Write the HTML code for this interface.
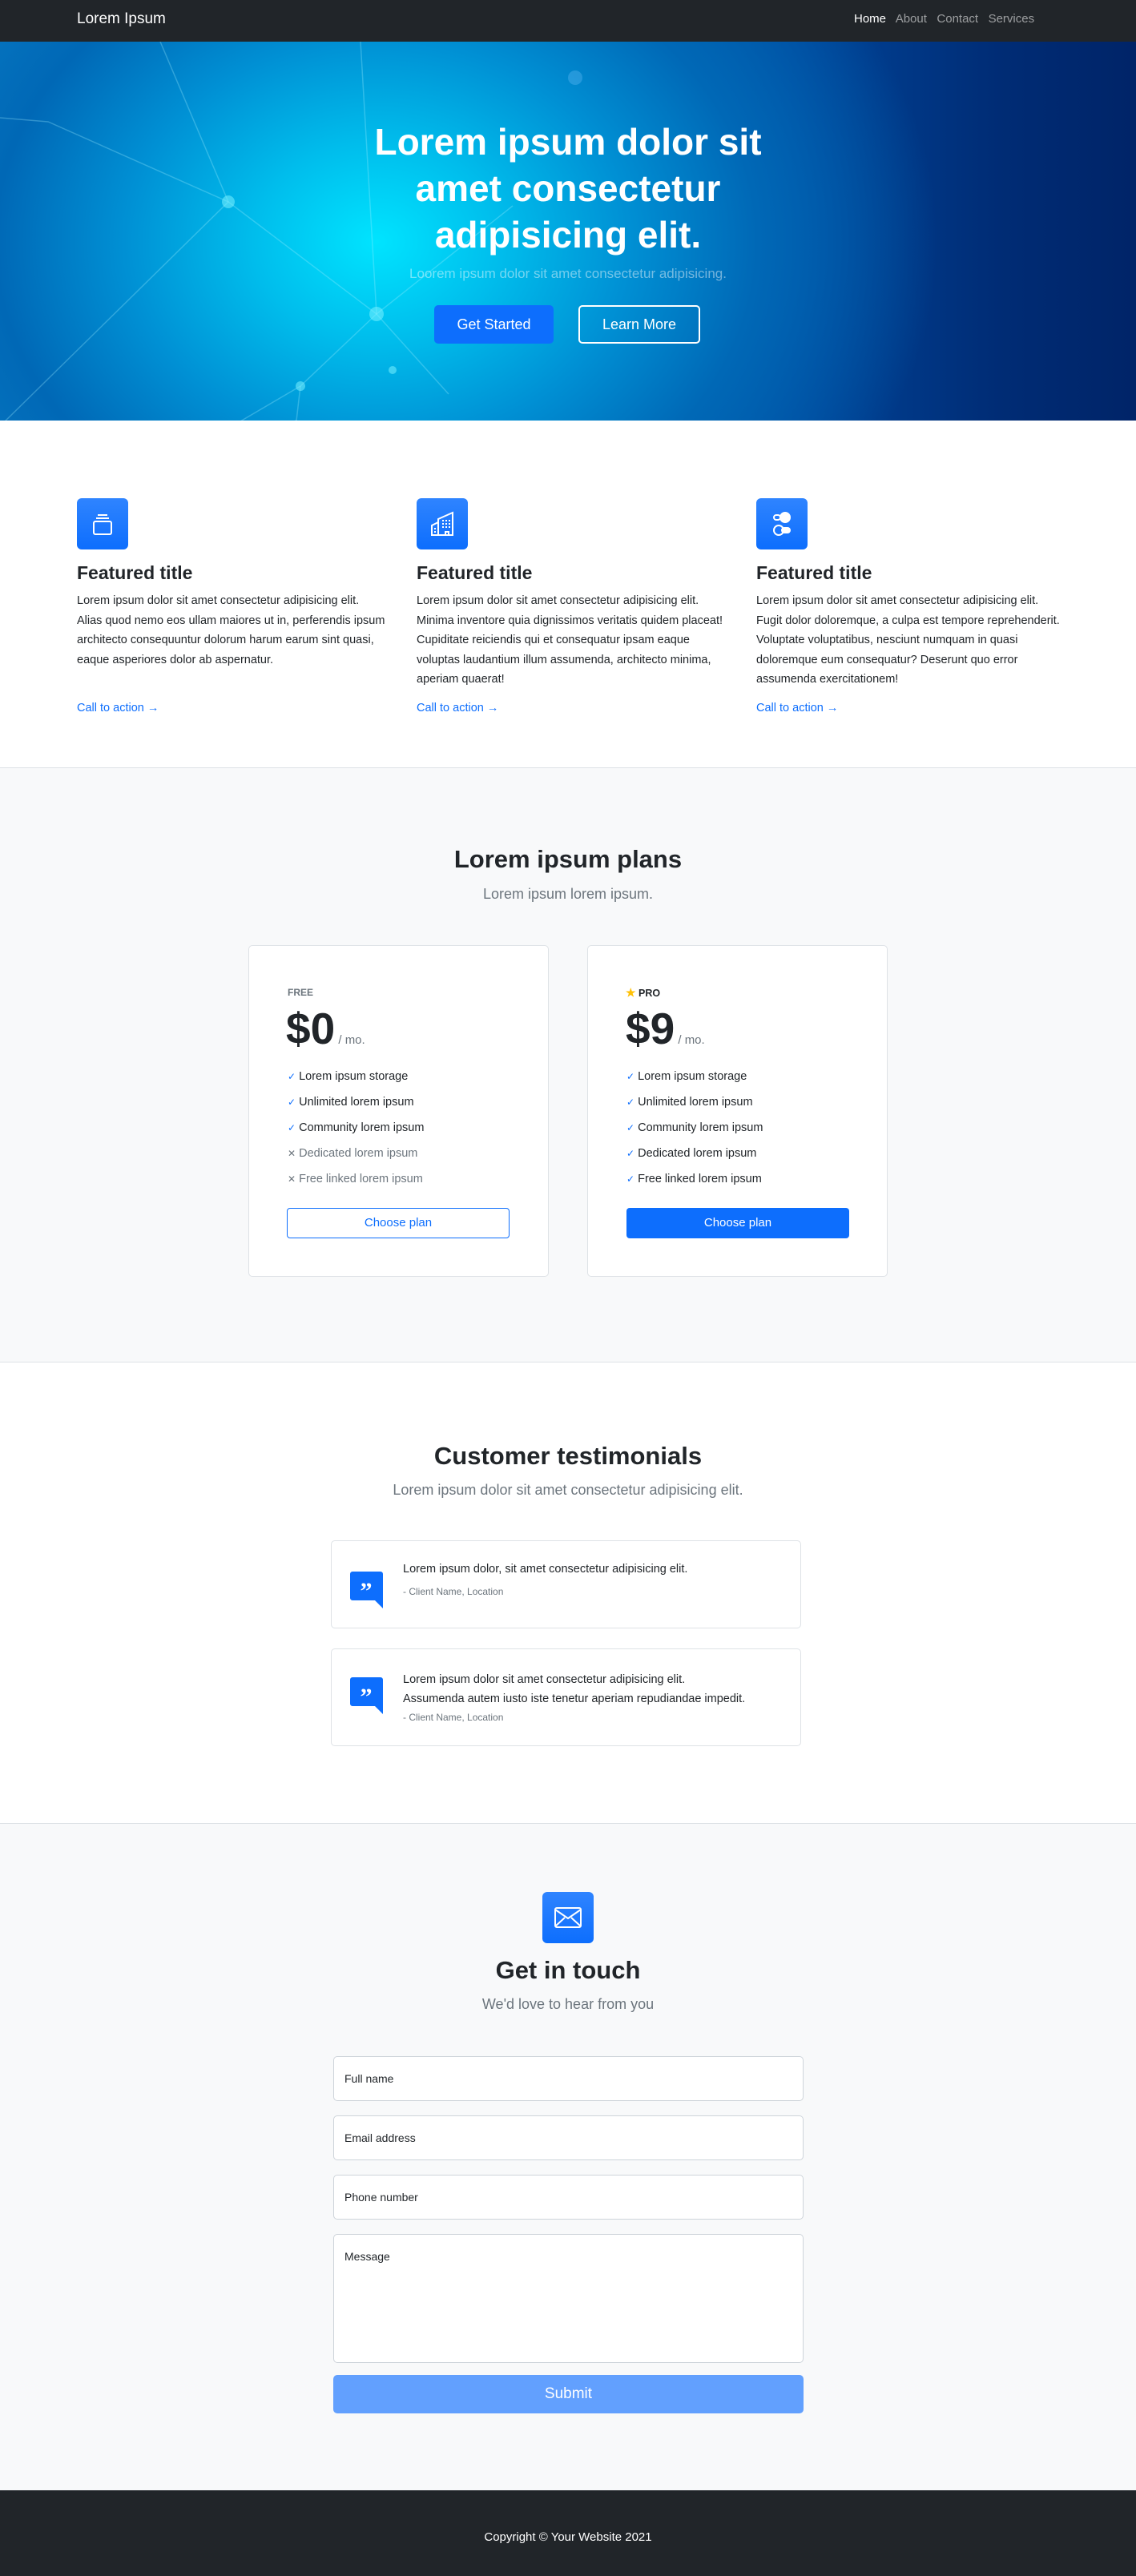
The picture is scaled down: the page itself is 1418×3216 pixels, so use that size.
<!DOCTYPE html>
<html><head><meta charset="utf-8"><style>
*{box-sizing:border-box;margin:0;padding:0}
body{width:1418px;height:3216px;position:relative;font-family:"Liberation Sans",sans-serif;color:#212529;background:#fff;overflow:hidden}
.a{position:absolute}
.c{text-align:center;left:0;width:1418px}
nav{position:absolute;left:0;top:0;width:1418px;height:52px;background:#212529}
.hero{top:52px;left:0;width:1418px;height:473px;background:radial-gradient(ellipse 700px 560px at 470px 250px,#00e4ff 0%,#00bdec 22%,#0090d4 45%,#0068b6 68%,rgba(0,60,140,0) 100%),linear-gradient(90deg,#0a80c8 0%,#0066b6 45%,#00459a 70%,#002c75 88%,#002468 100%);overflow:hidden}
.icon{width:64px;height:64px;border-radius:6px;background:linear-gradient(#2f84ff,#0d6efd);display:flex;align-items:center;justify-content:center}
.ft{font-size:23px;font-weight:bold}
.fp{font-size:14.5px;line-height:24.6px;width:385px}
.cta{font-size:14.5px;color:#0d6efd}
.card{background:#fff;border:1px solid #dee2e6;border-radius:5px}
.li{font-size:14.5px;height:32px;line-height:32px}
.inp{left:416px;width:587px;height:56px;background:#fff;border:1px solid #ced4da;border-radius:5px;font-size:14px;padding:19px 13px}
</style></head><body>
<nav><div class="a" style="left:96px;top:13px;color:#fff;font-size:19px">Lorem Ipsum</div>
<div class="a" style="left:1066px;top:15px;font-size:15px;color:rgba(255,255,255,.55)"><span style="color:#fff">Home</span>&nbsp;&nbsp; About&nbsp;&nbsp; Contact&nbsp;&nbsp; Services</div></nav>
<div class="a hero">
<svg width="1418" height="473" style="position:absolute;left:0;top:0" stroke="rgba(160,240,255,.3)" stroke-width="1.5" fill="none">
<path d="M0 95 L60 100 L285 200 L470 340 L640 205"/><path d="M285 200 L0 480"/><path d="M470 340 L375 430 L0 650"/><path d="M285 200 L200 0"/><path d="M470 340 L450 0"/><path d="M375 430 L370 473"/><path d="M0 600 L370 473"/><path d="M470 340 L560 440"/>
<g fill="rgba(120,240,255,.55)" stroke="none"><circle cx="285" cy="200" r="8"/><circle cx="470" cy="340" r="9"/><circle cx="375" cy="430" r="6"/><circle cx="718" cy="45" r="9" fill="rgba(120,200,255,.3)"/><circle cx="490" cy="410" r="5"/></g></svg>
<div class="a c" style="top:96px;color:#fff;font-size:46px;font-weight:bold;line-height:58px">Lorem ipsum dolor sit<br>amet consectetur<br>adipisicing elit.</div>
<div class="a c" style="top:280px;color:rgba(255,255,255,.45);font-size:17px">Loorem ipsum dolor sit amet consectetur adipisicing.</div>
<div class="a" style="left:542px;top:329px;width:149px;height:48px;background:#0d6efd;border-radius:5px;color:#fff;font-size:18px;line-height:48px;text-align:center">Get Started</div>
<div class="a" style="left:722px;top:329px;width:152px;height:48px;border:2px solid #fff;border-radius:5px;color:#fff;font-size:18px;line-height:44px;text-align:center">Learn More</div>
</div>

<div class="a icon" style="left:96px;top:622px"><svg width="32" height="32" viewBox="0 0 16 16" fill="none" stroke="#fff" stroke-width="1"><path d="M5 2.5h6M4 4.5h8"/><rect x="2.5" y="6.5" width="11" height="8" rx="1"/></svg></div>
<div class="a icon" style="left:520px;top:622px"><svg width="32" height="32" viewBox="0 0 16 16" fill="none" stroke="#fff" stroke-width="1"><path d="M1.5 15V9l4-2V15M5.5 15V5l9-4V15H1M10 15v-2h2v2"/><path d="M8 6h1M10 6h1M12 6h1M8 8h1M10 8h1M12 8h1M8 10h1M10 10h1M12 10h1M3 11h1M3 13h1"/></svg></div>
<div class="a icon" style="left:944px;top:622px"><svg width="32" height="32" viewBox="0 0 16 16" fill="#fff" stroke="#fff" stroke-width="1"><circle cx="10" cy="4" r="3"/><rect x="3" y="2.5" width="4" height="3" rx="1.5" fill="none"/><circle cx="6" cy="12" r="3" fill="none"/><rect x="8" y="10.5" width="5" height="3" rx="1.5"/></svg></div>
<div class="a ft" style="left:96px;top:702px">Featured title</div>
<div class="a ft" style="left:520px;top:702px">Featured title</div>
<div class="a ft" style="left:944px;top:702px">Featured title</div>
<div class="a fp" style="left:96px;top:738px">Lorem ipsum dolor sit amet consectetur adipisicing elit. Alias quod nemo eos ullam maiores ut in, perferendis ipsum architecto consequuntur dolorum harum earum sint quasi, eaque asperiores dolor ab aspernatur.</div>
<div class="a fp" style="left:520px;top:738px">Lorem ipsum dolor sit amet consectetur adipisicing elit. Minima inventore quia dignissimos veritatis quidem placeat! Cupiditate reiciendis qui et consequatur ipsam eaque voluptas laudantium illum assumenda, architecto minima, aperiam quaerat!</div>
<div class="a fp" style="left:944px;top:738px">Lorem ipsum dolor sit amet consectetur adipisicing elit. Fugit dolor doloremque, a culpa est tempore reprehenderit. Voluptate voluptatibus, nesciunt numquam in quasi doloremque eum consequatur? Deserunt quo error assumenda exercitationem!</div>
<div class="a cta" style="left:96px;top:876px">Call to action →</div>
<div class="a cta" style="left:520px;top:876px">Call to action →</div>
<div class="a cta" style="left:944px;top:876px">Call to action →</div>

<div class="a" style="left:0;top:958px;width:1418px;height:743px;background:#f8f9fa;border-top:1px solid #dee2e6;border-bottom:1px solid #dee2e6"></div>
<div class="a c" style="top:1055px;font-size:31px;font-weight:bold">Lorem ipsum plans</div>
<div class="a c" style="top:1106px;font-size:18px;color:#6c757d;font-weight:300">Lorem ipsum lorem ipsum.</div>
<div class="a card" style="left:310px;top:1180px;width:375px;height:414px"></div>
<div class="a card" style="left:733px;top:1180px;width:375px;height:414px"></div>
<div class="a" style="left:359px;top:1232px;font-size:12px;font-weight:bold;color:#6c757d">FREE</div>
<div class="a" style="left:781px;top:1231px;font-size:12.5px;font-weight:bold"><span style="color:#ffc107;font-size:14px">★</span> PRO</div>
<div class="a" style="left:357px;top:1252px;font-size:55px;font-weight:bold">$0<span style="font-size:15px;font-weight:normal;color:#6c757d"> / mo.</span></div>
<div class="a" style="left:781px;top:1252px;font-size:55px;font-weight:bold">$9<span style="font-size:15px;font-weight:normal;color:#6c757d"> / mo.</span></div>
<div class="a" style="left:359px;top:1328px">
<div class="li"><span style="color:#0d6efd;font-size:12px">✓</span> Lorem ipsum storage</div>
<div class="li"><span style="color:#0d6efd;font-size:12px">✓</span> Unlimited lorem ipsum</div>
<div class="li"><span style="color:#0d6efd;font-size:12px">✓</span> Community lorem ipsum</div>
<div class="li" style="color:#6c757d"><span style="font-size:12px">✕</span> Dedicated lorem ipsum</div>
<div class="li" style="color:#6c757d"><span style="font-size:12px">✕</span> Free linked lorem ipsum</div></div>
<div class="a" style="left:782px;top:1328px">
<div class="li"><span style="color:#0d6efd;font-size:12px">✓</span> Lorem ipsum storage</div>
<div class="li"><span style="color:#0d6efd;font-size:12px">✓</span> Unlimited lorem ipsum</div>
<div class="li"><span style="color:#0d6efd;font-size:12px">✓</span> Community lorem ipsum</div>
<div class="li"><span style="color:#0d6efd;font-size:12px">✓</span> Dedicated lorem ipsum</div>
<div class="li"><span style="color:#0d6efd;font-size:12px">✓</span> Free linked lorem ipsum</div></div>
<div class="a" style="left:358px;top:1508px;width:278px;height:38px;border:1px solid #0d6efd;border-radius:4px;color:#0d6efd;font-size:15px;line-height:36px;text-align:center;background:#fff">Choose plan</div>
<div class="a" style="left:782px;top:1508px;width:278px;height:38px;background:#0d6efd;border-radius:4px;color:#fff;font-size:15px;line-height:38px;text-align:center">Choose plan</div>

<div class="a c" style="top:1800px;font-size:31px;font-weight:bold">Customer testimonials</div>
<div class="a c" style="top:1850px;font-size:18px;color:#6c757d;font-weight:300">Lorem ipsum dolor sit amet consectetur adipisicing elit.</div>
<div class="a card" style="left:413px;top:1923px;width:587px;height:110px"></div>
<div class="a card" style="left:413px;top:2058px;width:587px;height:122px"></div>
<svg class="a" style="left:437px;top:1962px" width="41" height="46" viewBox="0 0 41 46"><path d="M3 0h35a3 3 0 0 1 3 3v43l-10-10H3a3 3 0 0 1-3-3V3a3 3 0 0 1 3-3z" fill="#0d6efd"/><text x="20" y="34" font-size="30" font-weight="bold" fill="#fff" text-anchor="middle" font-family="Liberation Serif,serif">”</text></svg>
<svg class="a" style="left:437px;top:2094px" width="41" height="46" viewBox="0 0 41 46"><path d="M3 0h35a3 3 0 0 1 3 3v43l-10-10H3a3 3 0 0 1-3-3V3a3 3 0 0 1 3-3z" fill="#0d6efd"/><text x="20" y="34" font-size="30" font-weight="bold" fill="#fff" text-anchor="middle" font-family="Liberation Serif,serif">”</text></svg>
<div class="a" style="left:503px;top:1951px;font-size:14.5px">Lorem ipsum dolor, sit amet consectetur adipisicing elit.</div>
<div class="a" style="left:503px;top:1980px;font-size:12px;color:#6c757d">- Client Name, Location</div>
<div class="a" style="left:503px;top:2085px;font-size:14.5px;line-height:24px">Lorem ipsum dolor sit amet consectetur adipisicing elit.<br>Assumenda autem iusto iste tenetur aperiam repudiandae impedit.</div>
<div class="a" style="left:503px;top:2137px;font-size:12px;color:#6c757d">- Client Name, Location</div>

<div class="a" style="left:0;top:2276px;width:1418px;height:833px;background:#f8f9fa;border-top:1px solid #dee2e6"></div>
<div class="a icon" style="left:677px;top:2362px"><svg width="34" height="26" viewBox="0 0 34 26" fill="none" stroke="#fff" stroke-width="2"><rect x="1" y="1" width="32" height="24" rx="2"/><path d="M1 3l16 11L33 3M1 24l12-11M33 24L21 13"/></svg></div>
<div class="a c" style="top:2442px;font-size:31px;font-weight:bold">Get in touch</div>
<div class="a c" style="top:2492px;font-size:18px;color:#6c757d;font-weight:300">We'd love to hear from you</div>
<div class="a inp" style="top:2567px">Full name</div>
<div class="a inp" style="top:2641px">Email address</div>
<div class="a inp" style="top:2715px">Phone number</div>
<div class="a inp" style="top:2789px;height:161px">Message</div>
<div class="a" style="left:416px;top:2965px;width:587px;height:48px;background:#62a0fe;border-radius:5px;color:#fff;font-size:19px;line-height:48px;text-align:center">Submit</div>

<div class="a" style="left:0;top:3109px;width:1418px;height:107px;background:#212529"></div>
<div class="a c" style="top:3159px;color:#fff;font-size:15px">Copyright © Your Website 2021</div>
</body></html>
